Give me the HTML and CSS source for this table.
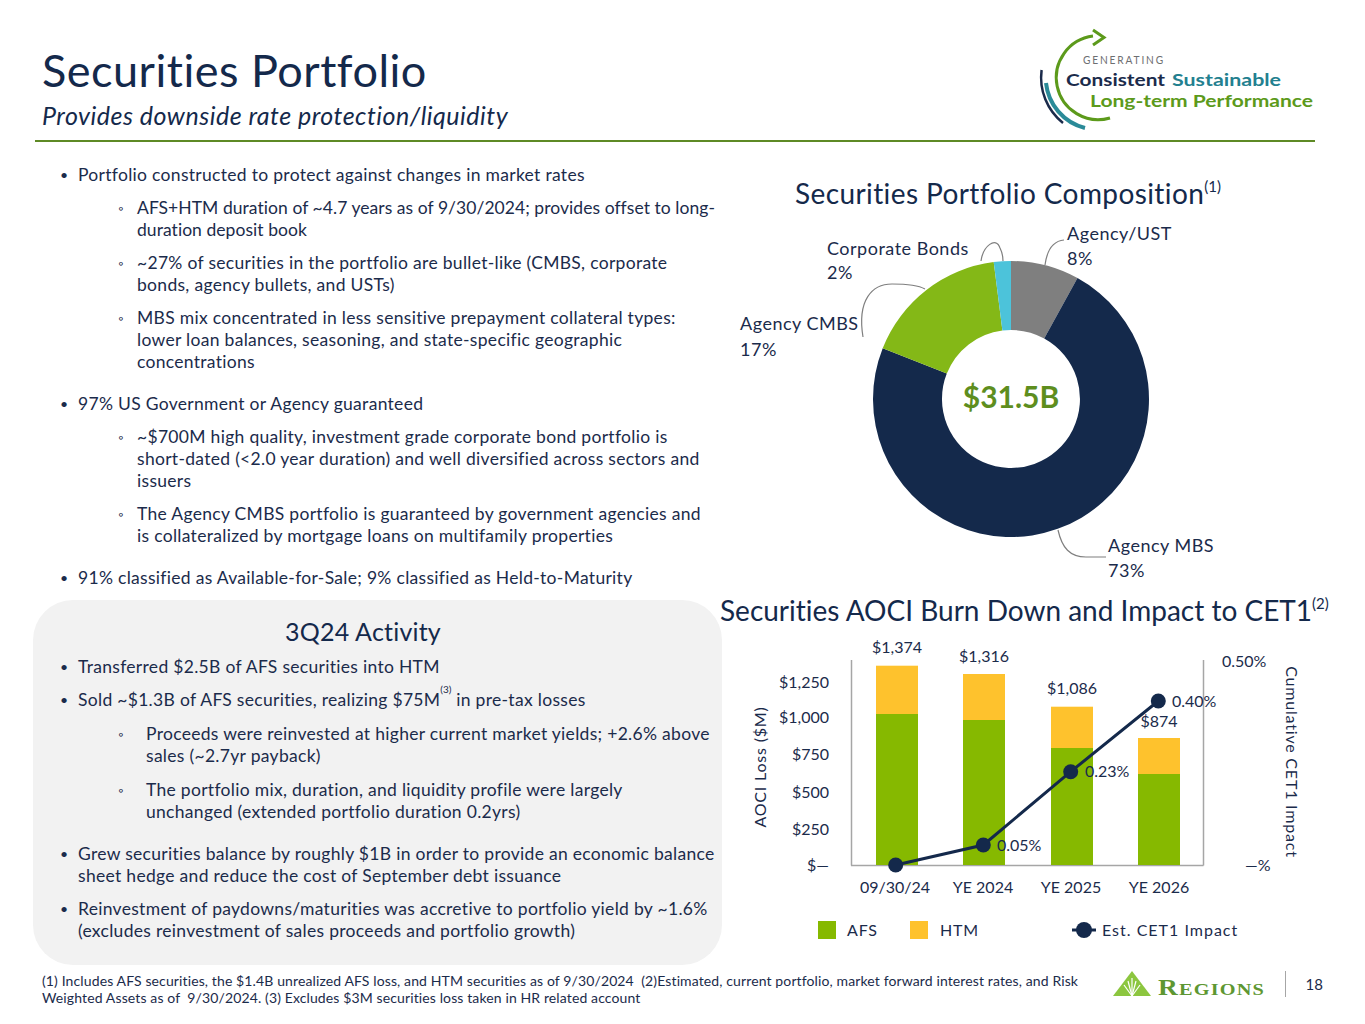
FILE: index.html
```html
<!DOCTYPE html>
<html lang="en">
<head>
<meta charset="utf-8">
<title>Securities Portfolio</title>
<link rel="stylesheet" href="styles.css">
</head>
<body>
<div class="slide">
  <header class="header">
    <div class="titles">
      <h1 class="title">Securities Portfolio</h1>
      <p class="subtitle">Provides downside rate protection/liquidity</p>
    </div>
    <svg class="brand" width="290" height="115" viewBox="1030 20 290 115" aria-label="Generating Consistent Sustainable Long-term Performance">
      <path d="M1093,36 A42,42 0 1 0 1110,118" fill="none" stroke="#5c9a1b" stroke-width="3"/>
      <path d="M1093,30 L1104,37.5 L1093,45" fill="none" stroke="#5c9a1b" stroke-width="3"/>
      <path d="M1041.6,70 A58,58 0 0 0 1063,123" fill="none" stroke="#1b2b4b" stroke-width="2.5"/>
      <path d="M1046,83 A52,52 0 0 0 1085,128" fill="none" stroke="#2a8a98" stroke-width="4"/>
      <text class="logo-gen" x="1083" y="64" textLength="82" lengthAdjust="spacingAndGlyphs">GENERATING</text>
      <text class="logo-big c-navy" x="1066" y="86" textLength="99" lengthAdjust="spacingAndGlyphs">Consistent</text>
      <text class="logo-big c-teal" x="1172" y="86" textLength="109" lengthAdjust="spacingAndGlyphs">Sustainable</text>
      <text class="logo-big c-green" x="1090" y="107" textLength="223" lengthAdjust="spacingAndGlyphs">Long-term Performance</text>
    </svg>
  </header>
  <div class="rule"></div>

  <main class="content">
    <section class="left">
      <ul class="points">
        <li class="l1">Portfolio constructed to protect against changes in market rates</li>
        <li class="l2 tight">AFS+HTM duration of ~4.7 years as of 9/30/2024; provides offset to long-<br>duration deposit book</li>
        <li class="l2">~27% of securities in the portfolio are bullet-like (CMBS, corporate<br>bonds, agency bullets, and USTs)</li>
        <li class="l2">MBS mix concentrated in less sensitive prepayment collateral types:<br>lower loan balances, seasoning, and state-specific geographic<br>concentrations</li>
        <li class="l1 after-sub">97% US Government or Agency guaranteed</li>
        <li class="l2">~$700M high quality, investment grade corporate bond portfolio is<br>short-dated (&lt;2.0 year duration) and well diversified across sectors and<br>issuers</li>
        <li class="l2">The Agency CMBS portfolio is guaranteed by government agencies and<br>is collateralized by mortgage loans on multifamily properties</li>
        <li class="l1 after-sub">91% classified as Available-for-Sale; 9% classified as Held-to-Maturity</li>
      </ul>

      <div class="activity">
        <h3 class="activity-title">3Q24 Activity</h3>
        <ul class="points boxed">
          <li class="l1">Transferred $2.5B of AFS securities into HTM</li>
          <li class="l1">Sold ~$1.3B of AFS securities, realizing $75M<sup>(3)</sup>&nbsp;in pre-tax losses</li>
          <li class="l2">Proceeds were reinvested at higher current market yields; +2.6% above<br>sales (~2.7yr payback)</li>
          <li class="l2">The portfolio mix, duration, and liquidity profile were largely<br>unchanged (extended portfolio duration 0.2yrs)</li>
          <li class="l1 after-sub">Grew securities balance by roughly $1B in order to provide an economic balance<br>sheet hedge and reduce the cost of September debt issuance</li>
          <li class="l1">Reinvestment of paydowns/maturities was accretive to portfolio yield by ~1.6%<br>(excludes reinvestment of sales proceeds and portfolio growth)</li>
        </ul>
      </div>
    </section>

    <section class="right">
      <h2 class="chart-title donut-title">Securities Portfolio Composition<sup>(1)</sup></h2>
      <svg class="donut" width="645" height="385" viewBox="720 209 645 385">
        <path d="M1011,261 A138,138 0 0 1 1077.5,278.1 L1044.2,338.5 A69,69 0 0 0 1011,330 Z" fill="#7f7f7f"/>
        <path d="M1077.5,278.1 A138,138 0 1 1 882.7,348.2 L946.8,373.6 A69,69 0 1 0 1044.2,338.5 Z" fill="#14294b"/>
        <path d="M882.7,348.2 A138,138 0 0 1 993.7,262.1 L1002.4,330.5 A69,69 0 0 0 946.8,373.6 Z" fill="#84b817"/>
        <path d="M993.7,262.1 A138,138 0 0 1 1011,261 L1011,330 A69,69 0 0 0 1002.4,330.5 Z" fill="#4cc3da"/>
        <g class="leader">
          <path d="M981,261 C983,246 996,236 1000,248 C1002,252 1003,256 1003,261"/>
          <path d="M1045,265 C1047,250 1053,241 1064,240"/>
          <path d="M863,337 C857,300 872,284 892,284 C908,284 918,285 925,289"/>
          <path d="M1058,530 C1062,548 1070,557 1086,557 L1106,557"/>
        </g>
        <g class="donut-label">
          <text x="827" y="255">Corporate Bonds</text>
          <text x="827" y="279">2%</text>
          <text x="1067" y="240">Agency/UST</text>
          <text x="1067" y="265">8%</text>
          <text x="740" y="330">Agency CMBS</text>
          <text x="740" y="356">17%</text>
          <text x="1108" y="552">Agency MBS</text>
          <text x="1108" y="577">73%</text>
        </g>
        <text class="donut-center" x="1011" y="408" text-anchor="middle">$31.5B</text>
      </svg>

      <h2 class="chart-title bar-title">Securities AOCI Burn Down and Impact to CET1<sup>(2)</sup></h2>
      <svg class="bars" width="645" height="339" viewBox="720 626 645 339">
        <g class="axis">
          <line x1="851.5" y1="660" x2="851.5" y2="865.5"/>
          <line x1="851" y1="865.5" x2="1203.5" y2="865.5"/>
          <line x1="1203.5" y1="660" x2="1203.5" y2="865.5"/>
        </g>
        <g class="tick" text-anchor="end">
          <text x="829" y="688">$1,250</text>
          <text x="829" y="723">$1,000</text>
          <text x="829" y="760">$750</text>
          <text x="829" y="798">$500</text>
          <text x="829" y="835">$250</text>
          <text x="829" y="871">$—</text>
        </g>
        <g class="tick">
          <text x="1222" y="667">0.50%</text>
          <text x="1245" y="871">—%</text>
        </g>
        <text class="tick lbl" transform="rotate(-90 766 767)" x="766" y="767" text-anchor="middle">AOCI Loss ($M)</text>
        <text class="tick lbl" transform="rotate(90 1286 762)" x="1286" y="762" text-anchor="middle">Cumulative CET1 Impact</text>

        <g class="htm">
          <rect x="876" y="665.7" width="42" height="48.3"/>
          <rect x="963" y="674" width="42" height="46"/>
          <rect x="1051" y="706.7" width="42" height="41.3"/>
          <rect x="1138" y="738" width="42" height="36"/>
        </g>
        <g class="afs">
          <rect x="876" y="714" width="42" height="151"/>
          <rect x="963" y="720" width="42" height="145"/>
          <rect x="1051" y="748" width="42" height="117"/>
          <rect x="1138" y="774" width="42" height="91"/>
        </g>
        <g class="tick" text-anchor="middle">
          <text x="897" y="653">$1,374</text>
          <text x="984" y="662">$1,316</text>
          <text x="1072" y="694">$1,086</text>
          <text x="1159" y="727">$874</text>
          <text x="895" y="893">09/30/24</text>
          <text x="983" y="893">YE 2024</text>
          <text x="1071" y="893">YE 2025</text>
          <text x="1159" y="893">YE 2026</text>
        </g>
        <polyline class="cet1" points="895.7,865 983.3,845 1070.7,771.7 1158.3,701"/>
        <g class="dot">
          <circle cx="895.7" cy="865" r="7.5"/>
          <circle cx="983.3" cy="845" r="7.5"/>
          <circle cx="1070.7" cy="771.7" r="7.5"/>
          <circle cx="1158.3" cy="701" r="7.5"/>
        </g>
        <g class="tick">
          <text x="997" y="851">0.05%</text>
          <text x="1085" y="777">0.23%</text>
          <text x="1172" y="707">0.40%</text>
        </g>
        <g class="legend">
          <rect class="afs-sw" x="818" y="921" width="18" height="18"/>
          <text class="tick lbl" x="847" y="936">AFS</text>
          <rect class="htm-sw" x="910" y="921" width="18" height="18"/>
          <text class="tick lbl" x="940" y="936">HTM</text>
          <line class="cet1" x1="1072" y1="930" x2="1096" y2="930"/>
          <circle class="dot" cx="1084" cy="930" r="8"/>
          <text class="tick lbl legend-wide" x="1102" y="936">Est. CET1 Impact</text>
        </g>
      </svg>
    </section>
  </main>

  <footer class="footer">
    <p class="notes">(1) Includes AFS securities, the $1.4B unrealized AFS loss, and HTM securities as of 9/30/2024&nbsp; (2)Estimated, current portfolio, market forward interest rates, and Risk<br>Weighted Assets as of&nbsp; 9/30/2024. (3) Excludes $3M securities loss taken in HR related account</p>
    <div class="footer-brand">
      <svg class="regions" width="158" height="32" viewBox="1110 968 158 32" aria-label="Regions">
        <path d="M1132,971 L1151,996 L1113,996 Z" fill="#8cc63f"/>
        <g stroke="#ffffff" stroke-width="1.2" fill="none">
          <path d="M1132,996 L1124,985"/>
          <path d="M1132,996 L1128,981"/>
          <path d="M1132,996 L1132,978"/>
          <path d="M1132,996 L1136,981"/>
          <path d="M1132,996 L1140,985"/>
        </g>
        <text class="regions-word" x="1158" y="995" textLength="107" lengthAdjust="spacingAndGlyphs"><tspan class="big">R</tspan>EGIONS</text>
      </svg>
      <span class="sep"></span>
      <span class="page">18</span>
    </div>
  </footer>
</div>
</body>
</html>
```

FILE: styles.css
```css
* { box-sizing: border-box; }

body {
  margin: 0;
  background: #ffffff;
  font-family: Lato, "Open Sans", "DejaVu Sans", sans-serif;
  font-variant-ligatures: none;
  color: #1b2b4b;
}

.slide {
  width: 1365px;
  height: 1024px;
  overflow: hidden;
  display: flex;
  flex-direction: column;
  background: #ffffff;
}

/* ---------- header ---------- */
.header {
  height: 140px;
  display: flex;
  justify-content: space-between;
  align-items: flex-start;
  padding: 0 45px 0 42px;
}

.titles { padding-top: 44px; }

.title {
  margin: 0;
  font-size: 45px;
  line-height: 52px;
  font-weight: 400;
  letter-spacing: 0.5px;
  color: #14294b;
}

.subtitle {
  margin: 4px 0 0;
  font-size: 25px;
  line-height: 30px;
  font-style: italic;
  letter-spacing: 0.5px;
  color: #14294b;
}

.brand { margin-top: 20px; flex: none; }

.logo-gen {
  font-family: Lato, "Open Sans", sans-serif;
  font-size: 11px;
  fill: #6d6e71;
  letter-spacing: 2px;
}
.logo-big {
  font-family: Lato, "Open Sans", sans-serif;
  font-size: 17px;
  font-weight: 700;
}
.c-navy { fill: #1b2b4b; }
.c-teal { fill: #23808f; }
.c-green { fill: #5c9a1b; }

.rule {
  height: 2px;
  background: #5e8a25;
  margin: 0 50px 0 35px;
}

/* ---------- content ---------- */
.content {
  height: 823px;
  display: flex;
}

.left {
  width: 720px;
  flex: none;
  display: flex;
  flex-direction: column;
}

.points {
  list-style: none;
  margin: 22px 0 0;
  padding: 0;
  font-size: 17.5px;
  line-height: 22px;
  letter-spacing: 0.3px;
}

.points li {
  display: flex;
  white-space: nowrap;
}

.points .tight { letter-spacing: 0.05px; }

.points .l1 { padding-left: 60px; }
.points .l1::before {
  content: "•";
  flex: none;
  width: 18px;
  font-size: 14px;
}

.points .l2 {
  padding-left: 118px;
  margin-top: 11px;
}
.points .l2::before {
  content: "◦";
  flex: none;
  width: 19px;
  font-size: 13px;
}

.points .after-sub { margin-top: 20px; }

.points sup {
  font-size: 10px;
  line-height: 0;
  vertical-align: 7px;
  letter-spacing: 0;
}

.activity {
  margin-top: auto;
  margin-left: 33px;
  width: 689px;
  height: 365px;
  background: #f2f2f2;
  border-radius: 40px;
  padding-top: 17px;
}

.activity-title {
  margin: 0;
  padding-right: 29px;
  text-align: center;
  font-size: 25px;
  line-height: 28px;
  font-weight: 400;
  letter-spacing: 0.2px;
  color: #14294b;
}

.points.boxed { margin-top: 0; }
.points.boxed .l1 { padding-left: 27px; margin-top: 11px; }
.points.boxed .l2 { padding-left: 85px; margin-top: 12px; }
.points.boxed .l2::before { width: 28px; }
.points.boxed .after-sub { margin-top: 20px; }

/* ---------- right column ---------- */
.right {
  width: 645px;
  flex: none;
  display: flex;
  flex-direction: column;
}

.chart-title {
  margin: 0;
  font-size: 28px;
  line-height: 32px;
  font-weight: 400;
  color: #14294b;
  white-space: nowrap;
}
.chart-title sup {
  font-size: 15px;
  line-height: 0;
  vertical-align: 12px;
  letter-spacing: 0;
}

.donut-title {
  margin-top: 35px;
  padding-left: 75px;
  letter-spacing: 0.4px;
}

.donut, .bars { display: block; flex: none; }

.leader path { fill: none; stroke: #7f7f7f; stroke-width: 1.2; }

.donut-label text {
  font-size: 18px;
  letter-spacing: 0.5px;
  fill: #1b2b4b;
}

.donut-center {
  font-size: 30px;
  font-weight: 700;
  fill: #5e8e1e;
}

.axis line { stroke: #a6a6a6; stroke-width: 1.5; }

.tick {
  font-size: 16px;
  fill: #1b2b4b;
}
.tick.lbl { letter-spacing: 0.8px; }
.tick.legend-wide { letter-spacing: 1px; }

.htm rect, .htm-sw { fill: #fec22d; }
.afs rect, .afs-sw { fill: #86b900; }

.cet1 { fill: none; stroke: #14294b; stroke-width: 3; }
.dot circle, circle.dot { fill: #14294b; }

/* ---------- footer ---------- */
.footer {
  flex: 1;
  display: flex;
  justify-content: space-between;
  align-items: flex-start;
  padding: 7px 42px 0 42px;
}

.notes {
  margin: 0;
  font-size: 14px;
  line-height: 17px;
  letter-spacing: 0.12px;
  white-space: nowrap;
  color: #1b2b4b;
}

.footer-brand {
  display: flex;
  align-items: center;
  margin-top: -4px;
}

.regions { display: block; }
.regions-word {
  font-family: "Liberation Serif", serif;
  font-weight: 700;
  font-size: 17px;
  fill: #5e9732;
  letter-spacing: 1px;
}
.regions-word .big { font-size: 23px; }

.sep {
  width: 1px;
  height: 26px;
  background: #a6a6a6;
  margin: 0 20px 0 17px;
}

.page {
  font-size: 15px;
  color: #1b2b4b;
}
```
